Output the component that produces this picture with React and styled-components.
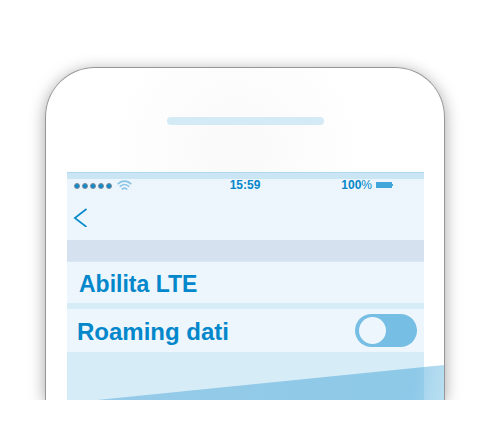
import React from "react";
import styled, { createGlobalStyle } from "styled-components";

const GlobalStyle = createGlobalStyle`
  *, *::before, *::after { box-sizing: border-box; }
  body {
    margin: 0;
    background: #fff;
    font-family: "Liberation Sans", Arial, sans-serif;
    color: #0387cb;
  }
`;

const Stage = styled.main`
  overflow: hidden;
  padding: 67px 33px 0 45px;
`;

const Phone = styled.section`
  position: relative;
  border: 1px solid #969696;
  border-bottom: 0;
  border-radius: 50px 50px 0 0;
  padding: 0 20px 0 21px;
  background: radial-gradient(circle at 190px 80px, #f9f9f9 0, #fff 130px);
  box-shadow: 0 3px 16px rgba(0, 0, 0, 0.36);
`;

const Bezel = styled.div`
  display: flex;
  justify-content: center;
  height: 104px;
  padding-top: 49px;
`;

const Speaker = styled.div`
  width: 44%;
  height: 8px;
  border-radius: 4px;
  background: #d4eaf5;
`;

const Screen = styled.div`
  background: #d6ecf6;
  padding-bottom: 48px;
`;

const TopStrip = styled.div`
  height: 7px;
  border-top: 1px solid #b1d8ee;
  background: #cae6f4;
`;

const Header = styled.header`
  height: 61px;
  background: linear-gradient(#edf5fc, #eef6fd);
`;

const StatusBar = styled.div`
  display: grid;
  grid-template-columns: 1fr auto 1fr;
  align-items: center;
  height: 12px;
  padding: 0 8px 0 7px;
  font-size: 12px;
  line-height: 12px;
`;

const Signal = styled.div`
  display: flex;
  align-items: center;
  gap: 5px;
`;

const Clock = styled.time`
  font-weight: 700;
`;

const Battery = styled.div`
  display: flex;
  align-items: center;
  justify-content: flex-end;
  gap: 4px;
  padding-right: 23px;
`;

const BackButton = styled.button`
  display: block;
  margin: 16px 0 0 6px;
  padding: 0;
  border: 0;
  background: none;
  color: inherit;
  cursor: pointer;

  svg { display: block; }
`;

const SectionBand = styled.div`
  height: 22px;
  border-bottom: 1px solid #d7e7f3;
  background: #d5e1ef;
`;

const Settings = styled.div`
  display: grid;
  gap: 6px;
`;

const Row = styled.label`
  display: flex;
  align-items: center;
  justify-content: space-between;
  height: ${({ $compact }) => ($compact ? 41 : 43)}px;
  padding: ${({ $compact }) => ($compact ? "2px 7px 0 12px" : "0 7px 0 10px")};
  background: #eef6fd;
  font-size: ${({ $compact }) => ($compact ? 23 : 24)}px;
  line-height: 28px;
  font-weight: 700;
`;

const Label = styled.span`
  padding-top: ${({ $lowered }) => ($lowered ? 2 : 0)}px;
`;

const Toggle = styled.input.attrs({ type: "checkbox", role: "switch" })`
  appearance: none;
  display: flex;
  align-items: center;
  width: 62px;
  height: 33px;
  margin: 0;
  padding: 0 4px;
  border-radius: 17px;
  background: #76bee4;
  cursor: pointer;

  &::before {
    content: "";
    width: 27px;
    height: 27px;
    border-radius: 50%;
    background: #eef6fd;
  }

  &:checked { justify-content: flex-end; background: #0387cb; }
`;

const Wedge = styled.svg`
  position: absolute;
  left: 0;
  bottom: 0;
  width: 100%;
  height: 35px;
`;

const dots = [0, 1, 2, 3, 4];

export default function App() {
  return (
    <>
      <GlobalStyle />
      <Stage>
        <Phone>
          <Bezel>
            <Speaker />
          </Bezel>
          <Screen>
            <TopStrip />
            <Header>
              <StatusBar>
                <Signal>
                  <svg width="38" height="8" viewBox="0 0 38 8" aria-hidden="true">
                    {dots.map((i) => (
                      <circle key={i} cx={3 + i * 8} cy="5" r="2.5" fill="#0f8bcb" stroke="#7d8c99" strokeWidth="1" />
                    ))}
                  </svg>
                  <svg width="15" height="11" viewBox="0 0 15 11" fill="none" stroke="#8ac5e6" strokeWidth="1.7" aria-hidden="true">
                    <path d="M.7 4.2C4.5 0 10.5 0 14.3 4.2M2.8 6.8C5.4 3.7 9.6 3.7 12.2 6.8M4.8 9.5C6.4 7.6 8.6 7.6 10.2 9.5" />
                  </svg>
                </Signal>
                <Clock>15:59</Clock>
                <Battery>
                  <span><b>100</b>%</span>
                  <svg width="17" height="6" viewBox="0 0 17 6" fill="#43a6da" shapeRendering="crispEdges" aria-hidden="true">
                    <path d="M0 0h16v2h1v2h-1v2H0z" />
                  </svg>
                </Battery>
              </StatusBar>
              <BackButton type="button" aria-label="Indietro">
                <svg width="15" height="20" viewBox="0 0 15 20" fill="none" stroke="currentColor" strokeWidth="1.6">
                  <path d="M13.5 2 1.8 11l11.7 9" />
                </svg>
              </BackButton>
            </Header>
            <SectionBand />
            <Settings>
              <Row as="div" $compact>
                <Label>Abilita LTE</Label>
              </Row>
              <Row htmlFor="roaming">
                <Label $lowered>Roaming dati</Label>
                <Toggle id="roaming" />
              </Row>
            </Settings>
          </Screen>
          <Wedge viewBox="0 0 398 35" preserveAspectRatio="none" aria-hidden="true">
            <defs>
              <linearGradient id="glass" gradientUnits="userSpaceOnUse" x1="51" y1="0" x2="398" y2="50">
                <stop offset="0" stopColor="#56aadb" stopOpacity=".5" />
                <stop offset=".9" stopColor="#4faadb" stopOpacity=".54" />
                <stop offset="1" stopColor="#5cb5e0" stopOpacity=".42" />
              </linearGradient>
            </defs>
            <path d="M51 35 398 0v35z" fill="url(#glass)" />
          </Wedge>
        </Phone>
      </Stage>
    </>
  );
}
